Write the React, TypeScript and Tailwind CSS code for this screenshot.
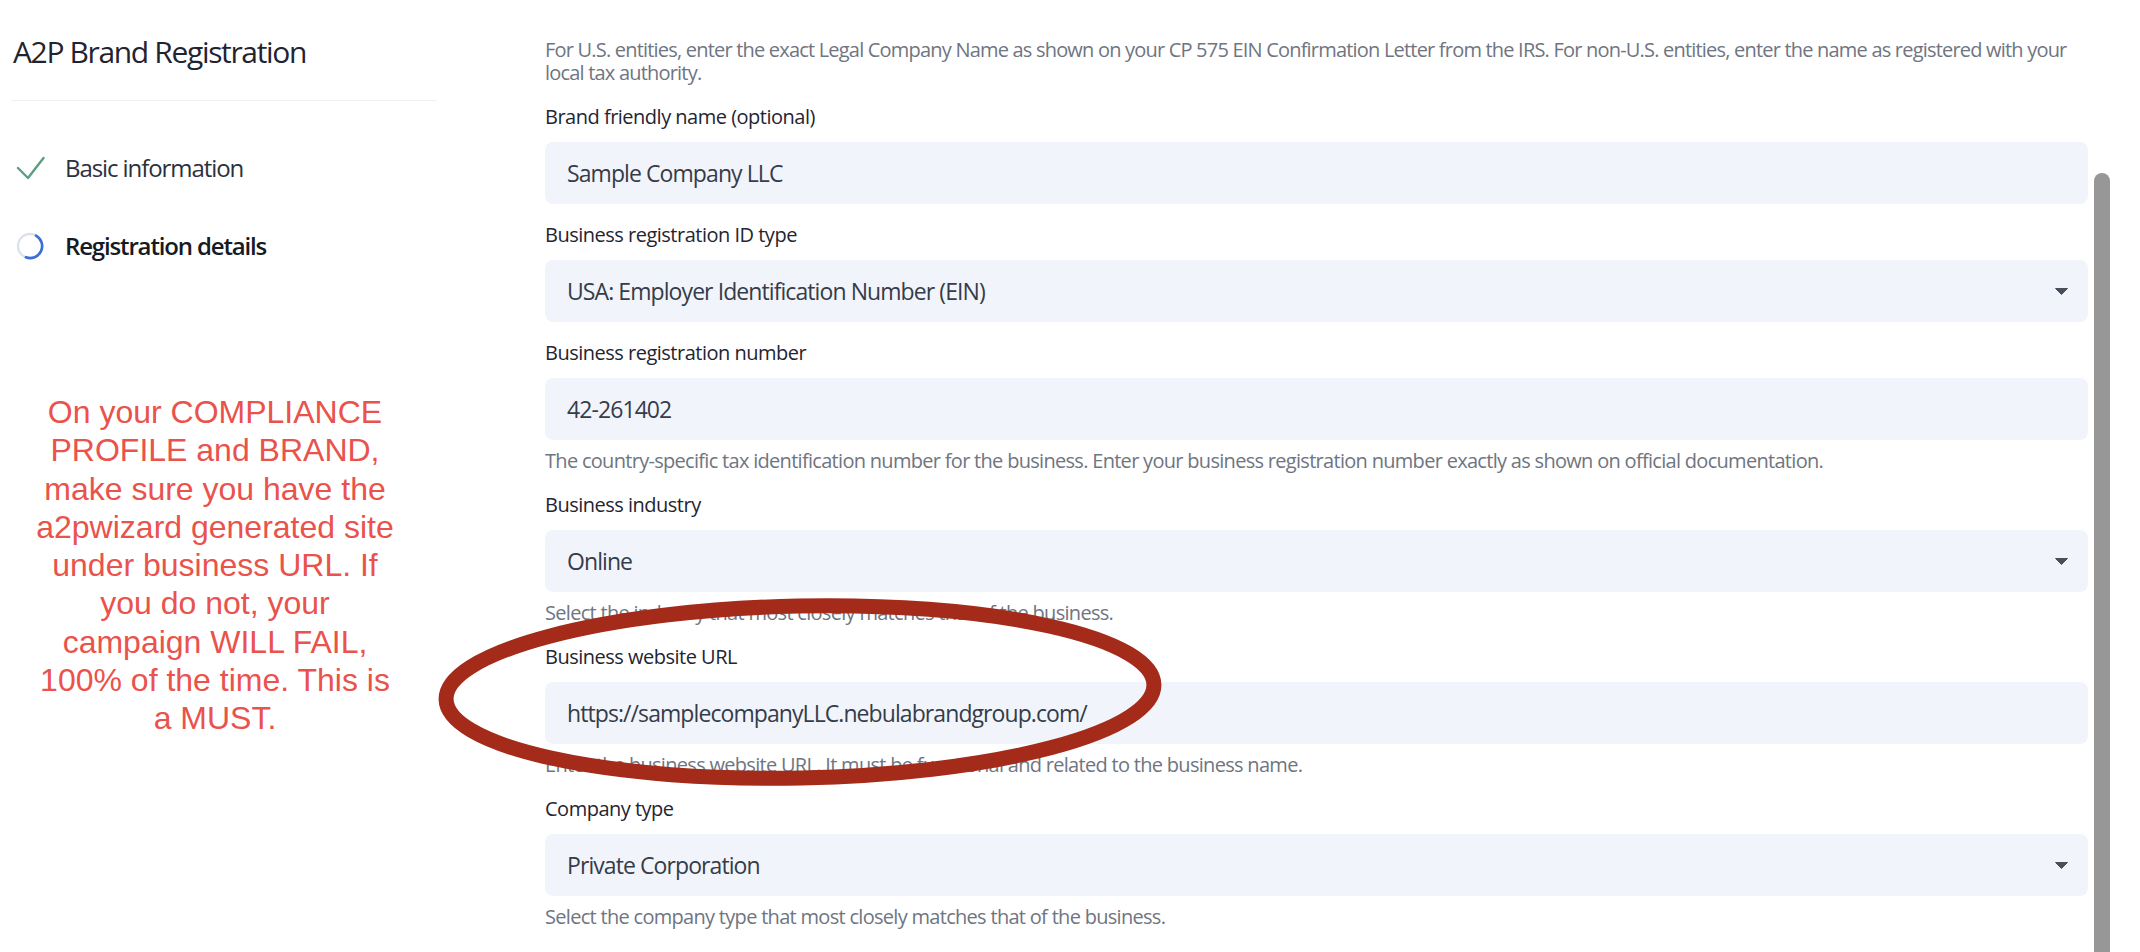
import React from "react";

const Caret = () => (
  <svg width="13" height="7" viewBox="0 0 13 7" className="shrink-0">
    <path d="M0.5 0.5 H12.5 L6.5 6.5 Z" fill="#4a4f5c" stroke="#4a4f5c" strokeWidth="1" strokeLinejoin="round" />
  </svg>
);

type FieldProps = {
  label: string;
  value: string;
  select?: boolean;
  help?: string;
  mt: string;
};

function Field({ label, value, select, help, mt }: FieldProps) {
  return (
    <div className={mt}>
      <div className="text-[20px] leading-[24px] font-medium tracking-[-0.025em] text-[#1f2532]">{label}</div>
      <div className="mt-[13px] flex h-[62px] items-center rounded-[8px] bg-[#f1f5fb] pl-[22px] pr-[20px]">
        <span className="flex-1 text-[23px] leading-[30px] tracking-[-0.04em] text-[#363c48]">{value}</span>
        {select && <Caret />}
      </div>
      {help && <div className="mt-[9px] text-[20px] leading-[23px] tracking-[-0.035em] text-[#6f7581]">{help}</div>}
    </div>
  );
}

export default function App() {
  return (
    <div className="relative flex h-[952px] w-[2140px] overflow-hidden bg-white font-['Open_Sans',sans-serif]">
      {/* Sidebar */}
      <aside className="w-[545px] shrink-0 pl-[11px] pt-[32px]">
        <div className="pl-[2px] text-[30px] leading-[40px] font-medium tracking-[-0.045em] text-[#1f2430]">A2P Brand Registration</div>
        <div className="mt-[28px] h-px w-[426px] bg-[#eceff3]" />
        <div className="mt-[51px] flex h-[32px] items-center">
          <div className="flex w-[54px] pl-[5px]">
            <svg width="29" height="24" viewBox="0 0 29 24">
              <polyline points="2,12 12,22 27.5,2" fill="none" stroke="#5c9e80" strokeWidth="2.4" strokeLinecap="round" strokeLinejoin="round" />
            </svg>
          </div>
          <span className="text-[24px] leading-[32px] tracking-[-0.045em] text-[#2b313d]">Basic information</span>
        </div>
        <div className="mt-[46px] flex h-[32px] items-center">
          <div className="flex w-[54px] pl-[5px]">
            <svg width="28" height="28" viewBox="0 0 28 28">
              <circle cx="14" cy="14" r="12" fill="none" stroke="#dde2ea" strokeWidth="2.4" />
              <path d="M20 3.6 A12 12 0 0 1 9.9 25.3" fill="none" stroke="#3a6fd9" strokeWidth="2.6" strokeLinecap="round" />
            </svg>
          </div>
          <span className="text-[24px] leading-[32px] font-semibold tracking-[-0.048em] text-[#161a23]">Registration details</span>
        </div>
        <div className="ml-[4px] mt-[131px] w-[400px] text-center font-['Liberation_Sans',Arial,sans-serif] text-[32px] leading-[38.3px] text-[#ea524c]">
          <div>On your COMPLIANCE</div>
          <div>PROFILE and BRAND,</div>
          <div>make sure you have the</div>
          <div>a2pwizard generated site</div>
          <div>under business URL. If</div>
          <div>you do not, your</div>
          <div>campaign WILL FAIL,</div>
          <div>100% of the time. This is</div>
          <div>a MUST.</div>
        </div>
      </aside>

      {/* Main form */}
      <main className="w-[1543px] shrink-0 pt-[38px]">
        <div className="text-[20px] leading-[23px] tracking-[-0.04em] text-[#6f7581]">
          For U.S. entities, enter the exact Legal Company Name as shown on your CP 575 EIN Confirmation Letter from the IRS. For non-U.S. entities, enter the name as registered with your local tax authority.
        </div>
        <Field mt="mt-[21px]" label="Brand friendly name (optional)" value="Sample Company LLC" />
        <Field mt="mt-[19px]" label="Business registration ID type" value="USA: Employer Identification Number (EIN)" select />
        <Field
          mt="mt-[19px]"
          label="Business registration number"
          value="42-261402"
          help="The country-specific tax identification number for the business. Enter your business registration number exactly as shown on official documentation."
        />
        <Field
          mt="mt-[21px]"
          label="Business industry"
          value="Online"
          select
          help="Select the industry that most closely matches that of the business."
        />
        <Field
          mt="mt-[21px]"
          label="Business website URL"
          value="https://samplecompanyLLC.nebulabrandgroup.com/"
          help="Enter the business website URL. It must be functional and related to the business name."
        />
        <Field
          mt="mt-[21px]"
          label="Company type"
          value="Private Corporation"
          select
          help="Select the company type that most closely matches that of the business."
        />
      </main>

      {/* Scrollbar */}
      <div className="flex-1 pl-[6px] pt-[173px]">
        <div className="h-full w-[16px] rounded-t-full bg-[#979797]" />
      </div>

      {/* Hand-drawn annotation ellipse */}
      <svg className="pointer-events-none absolute left-[420px] top-[580px]" width="760" height="230" viewBox="0 0 760 230">
        <ellipse cx="380" cy="112" rx="354" ry="86" fill="none" stroke="#a42a1a" strokeWidth="15" transform="rotate(-1.2 380 112)" />
      </svg>
    </div>
  );
}
